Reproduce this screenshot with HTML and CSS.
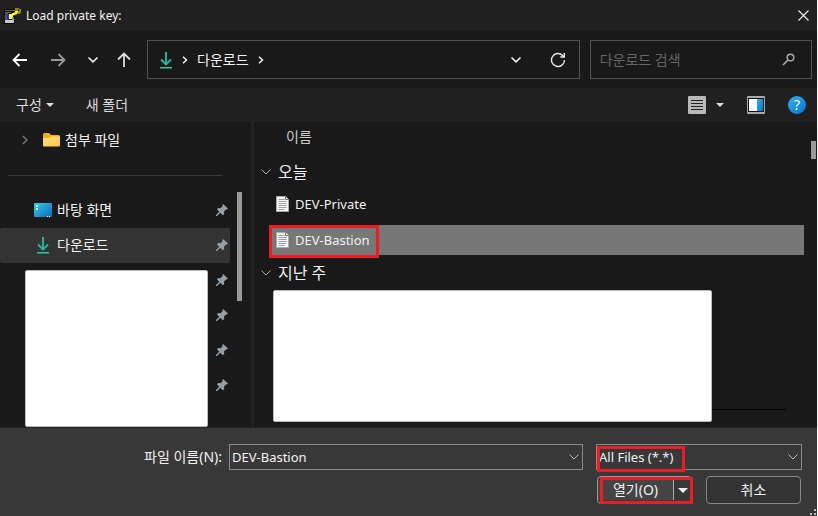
FILE: index.html
```html
<!DOCTYPE html>
<html lang="ko">
<head>
<meta charset="utf-8">
<title>Load private key:</title>
<link rel="stylesheet" href="styles.css">
</head>
<body>
<svg class="defs" aria-hidden="true">
  <defs>
    <linearGradient id="teal" x1="0" y1="0" x2="1" y2="1"><stop offset="0" stop-color="#30c98c"/><stop offset="1" stop-color="#16b5a8"/></linearGradient>
    <linearGradient id="desk" x1="0" y1="0" x2="1" y2="1"><stop offset="0" stop-color="#35cfe4"/><stop offset="1" stop-color="#0b68bd"/></linearGradient>
    <linearGradient id="gold" x1="0" y1="0" x2="1" y2="1"><stop offset="0" stop-color="#ffe08a"/><stop offset="1" stop-color="#fcc53e"/></linearGradient>
    <linearGradient id="blue" x1="0" y1="0" x2="1" y2="1"><stop offset="0" stop-color="#35adf0"/><stop offset="1" stop-color="#0078d4"/></linearGradient>
  </defs>
  <symbol id="download" viewBox="0 0 14 18">
    <path d="M7 1v12M2 8.500l5 5 5-5" fill="none" stroke="url(#teal)" stroke-width="1.800"/>
    <path d="M1 16h12v1.500H1z" fill="#2cc596"/>
  </symbol>
  <symbol id="pin" viewBox="0 0 12 12">
    <path d="M7 0l5 4.500-1.200 1-.8-.1-2 2.200.2 2.300-1.400 1.300-2.500-2.400L1 12H0v-1l3.200-3.300L.9 5.300l1.300-1.200 2.300.1 2.200-2.100L6.300 1z" fill="#94a0a8"/>
  </symbol>
  <symbol id="chev" viewBox="0 0 10 6"><path d="M.5.5L5 5 9.500.5" fill="none" stroke="currentColor"/></symbol>
  <symbol id="bold-chev" viewBox="0 0 12 8"><path d="M1.500 1.500L6 5.800l4.500-4.300" fill="none" stroke="currentColor" stroke-width="1.600"/></symbol>
  <symbol id="next" viewBox="0 0 6 8"><path d="M1 .8L4.500 4 1 7.200" fill="none" stroke="currentColor" stroke-width="1.500"/></symbol>
  <symbol id="down" viewBox="0 0 8 4"><path d="M0 0h8L4 4z" fill="currentColor"/></symbol>
  <symbol id="doc" viewBox="0 0 13 16">
    <path d="M.5.5h9l3 3v12H.5z" fill="#f5f5f5" stroke="#aaa"/>
    <path d="M9.500.5v3h3" fill="#fff" stroke="#777"/>
    <path d="M2.500 3.500h6M2.500 5.500h8M2.500 7.500h8M2.500 9.500h8M2.500 11.500h8M2.500 13.500h6" stroke="#a0a0a0"/>
  </symbol>
</svg>

<main class="dialog">
  <header class="titlebar">
    <svg class="app-icon" viewBox="0 0 17 16" aria-hidden="true">
      <path d="M0 1h14v6h-3v3H1V7H0z" fill="#000"/>
      <path d="M1 2h10v1H1zM1 4h6v1H1z" fill="#77720d"/>
      <path d="M1 5h3v7H1z" fill="#555"/><path d="M4 6h5v5H4z" fill="#eee"/><path d="M3 6h2v5H3z" fill="#2222df"/>
      <path d="M1 12h9v3H1z" fill="#c8c8c8"/><path d="M.5 12v3.500h10V12" fill="none" stroke="#000"/>
      <path d="M5.500 9.500l3-3 5-2" fill="none" stroke="#ffff00" stroke-width="2.500"/>
      <path d="M11 0h4v1h2v4h-1v1h-3V5h-2V3H9V2h2z" fill="#8c8500"/><path d="M11 3h3v2h-3z" fill="#ffed00"/><path d="M14 1h1v2h-1z" fill="#222"/>
      <path d="M8 9h2v3H8z" fill="#888"/>
    </svg>
    <h1>Load private key:</h1>
    <button class="close" aria-label="닫기"><svg width="11" height="11" viewBox="0 0 11 11"><path d="M.5.5l10 10M10.500.5l-10 10" stroke="#eee" stroke-width="1.200"/></svg></button>
  </header>

  <nav class="navbar">
    <div class="history">
      <button aria-label="뒤로"><svg width="16" height="14" viewBox="0 0 16 14"><path d="M15 7H2M7.500 1l-6 6 6 6" fill="none" stroke="#fff" stroke-width="1.800"/></svg></button>
      <button aria-label="앞으로"><svg width="16" height="14" viewBox="0 0 16 14"><path d="M1 7h13M8.500 1l6 6-6 6" fill="none" stroke="#999" stroke-width="1.800"/></svg></button>
      <button class="recent" aria-label="최근 위치"><svg width="12" height="8"><use href="#bold-chev"/></svg></button>
      <button aria-label="위로"><svg width="14" height="16" viewBox="0 0 14 16"><path d="M7 15V2M1 7.500l6-6 6 6" fill="none" stroke="#ddd" stroke-width="1.800"/></svg></button>
    </div>
    <div class="address">
      <svg width="14" height="18"><use href="#download"/></svg>
      <svg class="sep" width="6" height="8"><use href="#next"/></svg>
      <a href="#">다운로드</a>
      <svg class="sep" width="6" height="8"><use href="#next"/></svg>
      <button class="expand" aria-label="이전 위치"><svg width="12" height="8"><use href="#bold-chev"/></svg></button>
      <button class="refresh" aria-label="새로 고침"><svg width="16" height="16" viewBox="0 0 16 16"><path d="M14.500 8A6.500 6.500 0 1 1 12.600 3.400L14 4.800M14.300 1v4h-4" fill="none" stroke="#e8e8e8" stroke-width="1.400"/></svg></button>
    </div>
    <label class="search">
      <input type="text" placeholder="다운로드 검색" aria-label="다운로드 검색">
      <svg width="13" height="13" viewBox="0 0 13 13"><circle cx="8.500" cy="4.500" r="3.300" fill="none" stroke="#aaa" stroke-width="1.500"/><path d="M6 7l-5 5" stroke="#aaa" stroke-width="1.700"/></svg>
    </label>
  </nav>

  <div class="toolbar">
    <button>구성 <svg width="8" height="4"><use href="#down"/></svg></button>
    <button>새 폴더</button>
    <div class="views">
      <button aria-label="보기"><svg width="18" height="18" viewBox="0 0 18 18"><rect width="18" height="18" rx="1" fill="#b9b9b9"/><path d="M3 4.500h12M3 7.500h12M3 10.500h12M3 13.500h12" stroke="#222"/></svg></button>
      <button aria-label="보기 옵션"><svg width="8" height="4"><use href="#down"/></svg></button>
      <button aria-label="미리 보기 창"><svg width="18" height="18" viewBox="0 0 18 18"><rect width="18" height="18" rx="1" fill="#aaa"/><path d="M1 2h16v14H1z" fill="#111"/><path d="M2 3h8v12H2z" fill="#fff"/><path d="M10 3h6v12h-6z" fill="url(#blue)"/></svg></button>
      <button class="help" aria-label="도움말">?</button>
    </div>
  </div>

  <div class="content">
    <aside class="sidebar">
      <div class="tree">
        <a class="folder" href="#">
          <svg class="sep" width="6" height="10" viewBox="0 0 6 10"><path d="M.8 1L5 5 .8 9" fill="none" stroke="#777" stroke-width="1.500"/></svg>
          <svg width="17" height="14" viewBox="0 0 17 14"><path d="M0 1.500Q0 0 1.500 0H6l2 2h7.500Q17 2 17 3.500V6H0z" fill="#f5ad15"/><path d="M0 5h6l2-1.500h9v9q0 1-1 1H1q-1 0-1-1z" fill="url(#gold)"/></svg>
          <span>첨부 파일</span>
        </a>
        <hr>
        <ul class="pinned">
          <li><a href="#"><svg width="18" height="14" viewBox="0 0 18 14"><rect width="18" height="14" rx="1" fill="url(#desk)"/><path d="M2 2h2v2H2zM2 5h2v2H2z" fill="#d9ffff"/><path d="M13 13h1v1h-1zM15 13h1v1h-1z" fill="#fff"/></svg><span>바탕 화면</span></a><svg width="12" height="12"><use href="#pin"/></svg></li>
          <li class="current"><a href="#"><svg width="18" height="18"><use href="#download"/></svg><span>다운로드</span></a><svg width="12" height="12"><use href="#pin"/></svg></li>
          <li><svg width="12" height="12"><use href="#pin"/></svg></li>
          <li><svg width="12" height="12"><use href="#pin"/></svg></li>
          <li><svg width="12" height="12"><use href="#pin"/></svg></li>
          <li><svg width="12" height="12"><use href="#pin"/></svg></li>
        </ul>
        <div class="cover cover-side"></div>
      </div>
      <div class="scroll scroll-side"></div>
    </aside>

    <section class="files">
      <div class="list">
        <div class="column-name">이름</div>
        <h2><svg width="10" height="6"><use href="#chev"/></svg>오늘</h2>
        <div class="file"><svg width="13" height="16"><use href="#doc"/></svg><span>DEV-Private</span></div>
        <div class="file selected"><div class="mark mark-file"></div><svg width="13" height="16"><use href="#doc"/></svg><span>DEV-Bastion</span></div>
        <h2 class="past"><svg width="10" height="6"><use href="#chev"/></svg>지난 주</h2>
        <div class="rest"><div class="cover cover-files"></div><div class="rule"></div></div>
      </div>
      <div class="scroll scroll-files"></div>
    </section>
  </div>

  <form class="footer">
    <label class="name-label" for="name">파일 이름(N):</label>
    <div class="combo"><input id="name" type="text" value="DEV-Bastion"><svg width="10" height="6"><use href="#chev"/></svg></div>
    <div class="combo"><select aria-label="파일 형식"><option>All Files (*.*)</option></select><svg width="10" height="6"><use href="#chev"/></svg><div class="mark mark-type"></div></div>
    <div class="actions">
      <div class="split"><button type="button" class="open">열기(O)</button><button type="button" class="more" aria-label="열기 옵션"><svg width="10" height="5" viewBox="0 0 8 4"><use href="#down"/></svg></button><div class="mark mark-open"></div></div>
      <button type="button" class="cancel">취소</button>
    </div>
    <svg class="grip" width="6" height="6" viewBox="0 0 6 6"><path d="M4 0h2v2H4zM4 4h2v2H4zM0 4h2v2H0z" fill="#bbb"/></svg>
  </form>
</main>
</body>
</html>
```
FILE: styles.css
```css
* { box-sizing: border-box; }

body {
  margin: 0;
  background: #fff;
  color: #f2f2f2;
  font: 13px/20px "Noto Sans", "Noto Sans CJK KR", sans-serif;
}

svg { display: block; flex: none; }
.defs { position: absolute; width: 0; height: 0; }

button, input, select { font: inherit; color: inherit; }
button { display: flex; align-items: center; justify-content: center; padding: 0; border: 0; background: none; }
a { color: inherit; text-decoration: none; }

.dialog {
  display: flex;
  flex-direction: column;
  min-height: 100vh;
  margin-right: 1px;
  background: #191919;
}

.titlebar { display: flex; align-items: center; height: 31px; padding: 0 8px 0 4px; background: #202020; }
.app-icon { width: 17px; height: 16px; margin-right: 5px; }
.titlebar h1 { margin: 0; font-size: 12px; font-weight: 400; }
.close { margin-left: auto; }

.navbar { display: grid; grid-template-columns: 135px 432fr 232fr; align-items: center; height: 57px; padding: 0 5px 0 12px; }
.history { display: flex; align-items: center; gap: 22px; }
.history .recent { margin: 0 -4px 0 -1px; }
.address, .search { display: flex; align-items: center; min-width: 0; height: 39px; border: 1px solid #535353; font-size: 14px; }
.address { padding: 0 13px 0 11px; }
.address .sep { margin: 0 9px; }
.address .expand { margin-left: auto; margin-right: 28px; }
.search { margin-left: 10px; padding: 0 16px 0 9px; }
.search input { flex: 1; min-width: 0; padding: 0; border: 0; outline: 0; background: none; }
.search input::placeholder { color: #666; }

.toolbar { display: flex; align-items: center; gap: 32px; height: 34px; padding: 0 11px 0 16px; background: #202020; }
.toolbar button { gap: 4px; color: #ddd; font-size: 14px; }
.views { display: flex; align-items: center; gap: 23px; margin-left: auto; }
.views button:nth-child(2) { margin-left: -13px; }
.views .help { width: 18px; height: 18px; border-radius: 50%; background: linear-gradient(135deg, #35adf0, #0078d4); color: #fff; }

.content { display: flex; flex: 1; min-height: 305px; font-size: 14px; }

.sidebar { display: flex; width: 254px; border-right: 3px solid #222; }
.tree { position: relative; width: 230px; }
.folder { display: flex; align-items: center; height: 36px; padding-left: 22px; }
.folder .sep { margin-right: 15px; }
.folder span { margin-left: 5px; }
.tree hr { margin: 17px 8px; border: 0; border-top: 1px solid #3b3b3b; }
.pinned { margin: 0; padding: 0; list-style: none; }
.pinned li { display: flex; align-items: center; height: 35px; padding: 0 2px 2px 34px; }
.pinned a { display: flex; align-items: center; gap: 5px; }
.pinned li > svg { margin-left: auto; }
.pinned .current { border-radius: 2px; background: #333; }

.cover { border: 1px solid #bbb; border-radius: 2px; background: #fff; }
.cover-side { position: absolute; left: 25px; right: 22px; top: 148px; bottom: 0; }

.scroll { background: #999; }
.scroll-side { width: 5px; height: 109px; margin: 70px 0 0 7px; }
.scroll-files { width: 5px; height: 18px; margin: 19px 1px 0 0; }

.files { display: flex; flex: 1; }
.list { display: flex; flex: 1; flex-direction: column; padding: 0 7px 5px 16px; }
.column-name { height: 29px; padding-left: 16px; line-height: 30px; color: #ccc; }
.list h2 { display: flex; align-items: center; gap: 7px; height: 35px; margin: 3px 0 0 -9px; font-size: 16px; font-weight: 400; }
.list h2 svg { color: #aaa; }
.list .past { margin-top: 0; }
.file { position: relative; display: flex; align-items: center; gap: 6px; height: 30px; padding-left: 6px; margin-bottom: 6px; font-size: 13px; }
.file.selected { margin: 0; background: #777; }
.rest { display: flex; align-items: flex-end; flex: 1; padding-left: 3px; }
.cover-files { align-self: stretch; flex: 439; }
.rule { flex: 74; margin: 0 18px 12px 0; border-top: 1px solid #000; }

.mark { position: absolute; border: 3px solid #ed1c24; pointer-events: none; }
.mark-file { left: -1px; top: 0; width: 110px; height: 33px; }
.mark-type { left: 0; top: 1px; width: 88px; height: 26px; }
.mark-open { left: 2px; top: 0; width: 93px; height: 27px; }

.footer {
  position: relative;
  display: grid;
  grid-template-columns: 229px 354fr 219fr;
  grid-template-rows: 27px 28px;
  row-gap: 5px;
  height: 89px;
  padding: 16px 15px 0 0;
  border-top: 1px solid #222;
  background: #383838;
}
.name-label { padding: 3px 7px 0 0; text-align: right; font-size: 14px; }
.combo { position: relative; display: flex; align-items: center; height: 26px; border: 1px solid #8b8b8b; }
.combo:nth-of-type(2) { margin-left: 13px; }
.combo input, .combo select { width: 100%; height: 100%; padding: 0 24px 0 2px; border: 0; outline: 0; appearance: none; background: transparent; }
.combo > svg { position: absolute; right: 3px; color: #bbb; pointer-events: none; }

.actions { grid-column: 2 / 4; display: flex; justify-content: flex-end; gap: 14px; padding-right: 1px; font-size: 14px; }
.split { position: relative; display: flex; width: 95px; border: 1px solid #999; border-radius: 4px; }
.split .open { flex: 1; margin: 3px 0; border-right: 1px solid #aaa; background: #444; }
.split .more { width: 17px; }
.cancel { width: 95px; border: 1px solid #888; border-radius: 4px; background: #333; }
.grip { position: absolute; right: 1px; bottom: 1px; }
```
